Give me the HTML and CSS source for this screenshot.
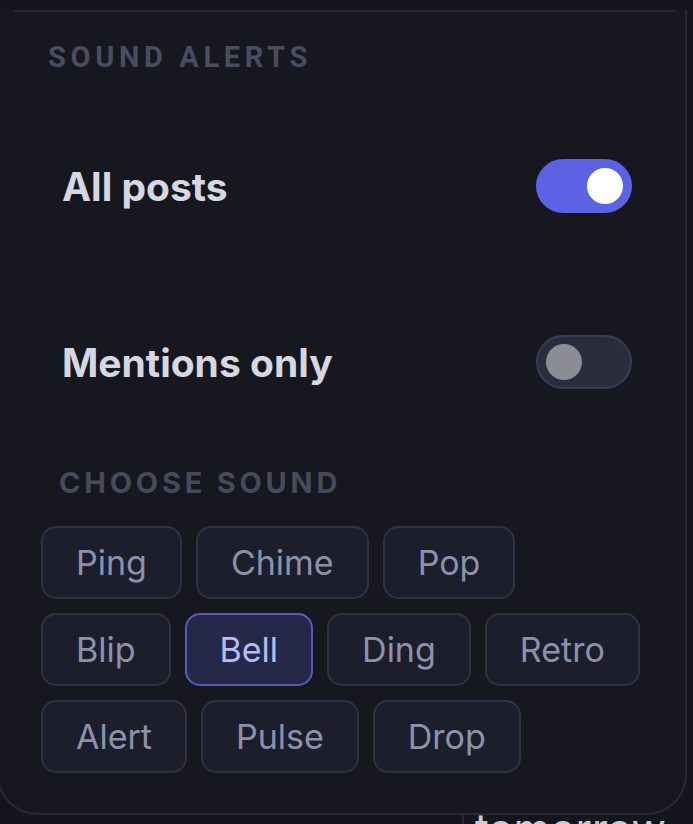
FILE: index.html
```html
<!DOCTYPE html>
<html lang="en">
<head>
  <meta charset="UTF-8" />
  <meta name="viewport" content="width=device-width, initial-scale=1.0" />
  <title>Sound Alerts</title>
  <link rel="stylesheet" href="styles.css">
</head>
<body>
  <div class="panel">
    <div class="divider"></div>

    <h2 class="section-title">Sound Alerts</h2>

    <div class="setting-row">
      <span class="setting-label">All posts</span>
      <button class="toggle on" aria-pressed="true"><span class="knob"></span></button>
    </div>

    <div class="setting-row">
      <span class="setting-label">Mentions only</span>
      <button class="toggle" aria-pressed="false"><span class="knob"></span></button>
    </div>

    <h3 class="sub-title">Choose Sound</h3>
    <div class="sounds">
      <button class="chip">Ping</button>
      <button class="chip">Chime</button>
      <button class="chip">Pop</button>
      <button class="chip">Blip</button>
      <button class="chip selected">Bell</button>
      <button class="chip">Ding</button>
      <button class="chip">Retro</button>
      <button class="chip">Alert</button>
      <button class="chip">Pulse</button>
      <button class="chip">Drop</button>
    </div>
  </div>

  <div class="behind">
    <span>tomorrow</span>
  </div>
</body>
</html>
```

FILE: styles.css
```css
body {
  font-family: Inter, "Noto Sans", sans-serif;
  margin: 0;
  background-color: #15161d;
  color: #d4d6e0;
  overflow: hidden;
}

.panel {
  background-color: #16171f;
  width: 690px;
  margin-left: -3px;
  border: 2px solid #272937;
  border-top: none;
  border-radius: 0 0 40px 40px;
  padding-bottom: 40px;
  box-sizing: border-box;
  position: relative;
  z-index: 2;
}

.divider {
  height: 2px;
  background-color: #242633;
  margin: 10px 9px 0 15px;
}

.section-title {
  font-family: Roboto, sans-serif;
  font-size: 29px;
  font-weight: 700;
  letter-spacing: 0.16em;
  text-transform: uppercase;
  color: #4a4d5f;
  margin: 0;
  padding: 28px 0 0 49px;
  line-height: 34px;
  height: 58px;
}

.setting-row {
  display: flex;
  align-items: center;
  justify-content: space-between;
  height: 176px;
  padding: 0 53px 0 63px;
}

.setting-label {
  font-size: 39px;
  font-weight: 700;
  color: #d5d7e1;
}

.toggle {
  width: 96px;
  height: 54px;
  border-radius: 27px;
  border: 2px solid #3b3e52;
  background-color: #2a2d3e;
  padding: 0;
  display: flex;
  align-items: center;
  cursor: pointer;
}

.toggle .knob {
  width: 36px;
  height: 36px;
  border-radius: 50%;
  background-color: #8b8c95;
  margin-left: 8px;
}

.toggle.on {
  background-color: #5b62e4;
  border-color: #5b62e4;
  justify-content: flex-end;
}

.toggle.on .knob {
  background-color: #ffffff;
  margin: 0 7px 0 0;
}

.sub-title {
  font-size: 29px;
  font-weight: 700;
  letter-spacing: 0.13em;
  text-transform: uppercase;
  color: #464a5b;
  margin: 0;
  padding: 16px 0 0 60px;
  line-height: 34px;
  height: 60px;
}

.sounds {
  display: flex;
  flex-wrap: wrap;
  gap: 14px;
  max-width: 610px;
  padding-left: 42px;
}

.chip {
  font-family: Inter, "Noto Sans", sans-serif;
  font-size: 34px;
  height: 73px;
  padding: 0 33px;
  border-radius: 15px;
  border: 2px solid #2e3242;
  background-color: #1c1f2b;
  color: #8d92ac;
  cursor: pointer;
}

.chip.selected {
  background-color: #252849;
  border-color: #575cb5;
  color: #b8bcf4;
}

.behind {
  margin: -8px 0 0 462px;
  border-left: 2px solid #262834;
  padding-left: 11px;
  height: 200px;
  font-size: 42px;
  color: #c9cad3;
  line-height: 1;
  position: relative;
  z-index: 1;
}

.behind span {
  display: block;
  padding-top: 1px;
}
```
